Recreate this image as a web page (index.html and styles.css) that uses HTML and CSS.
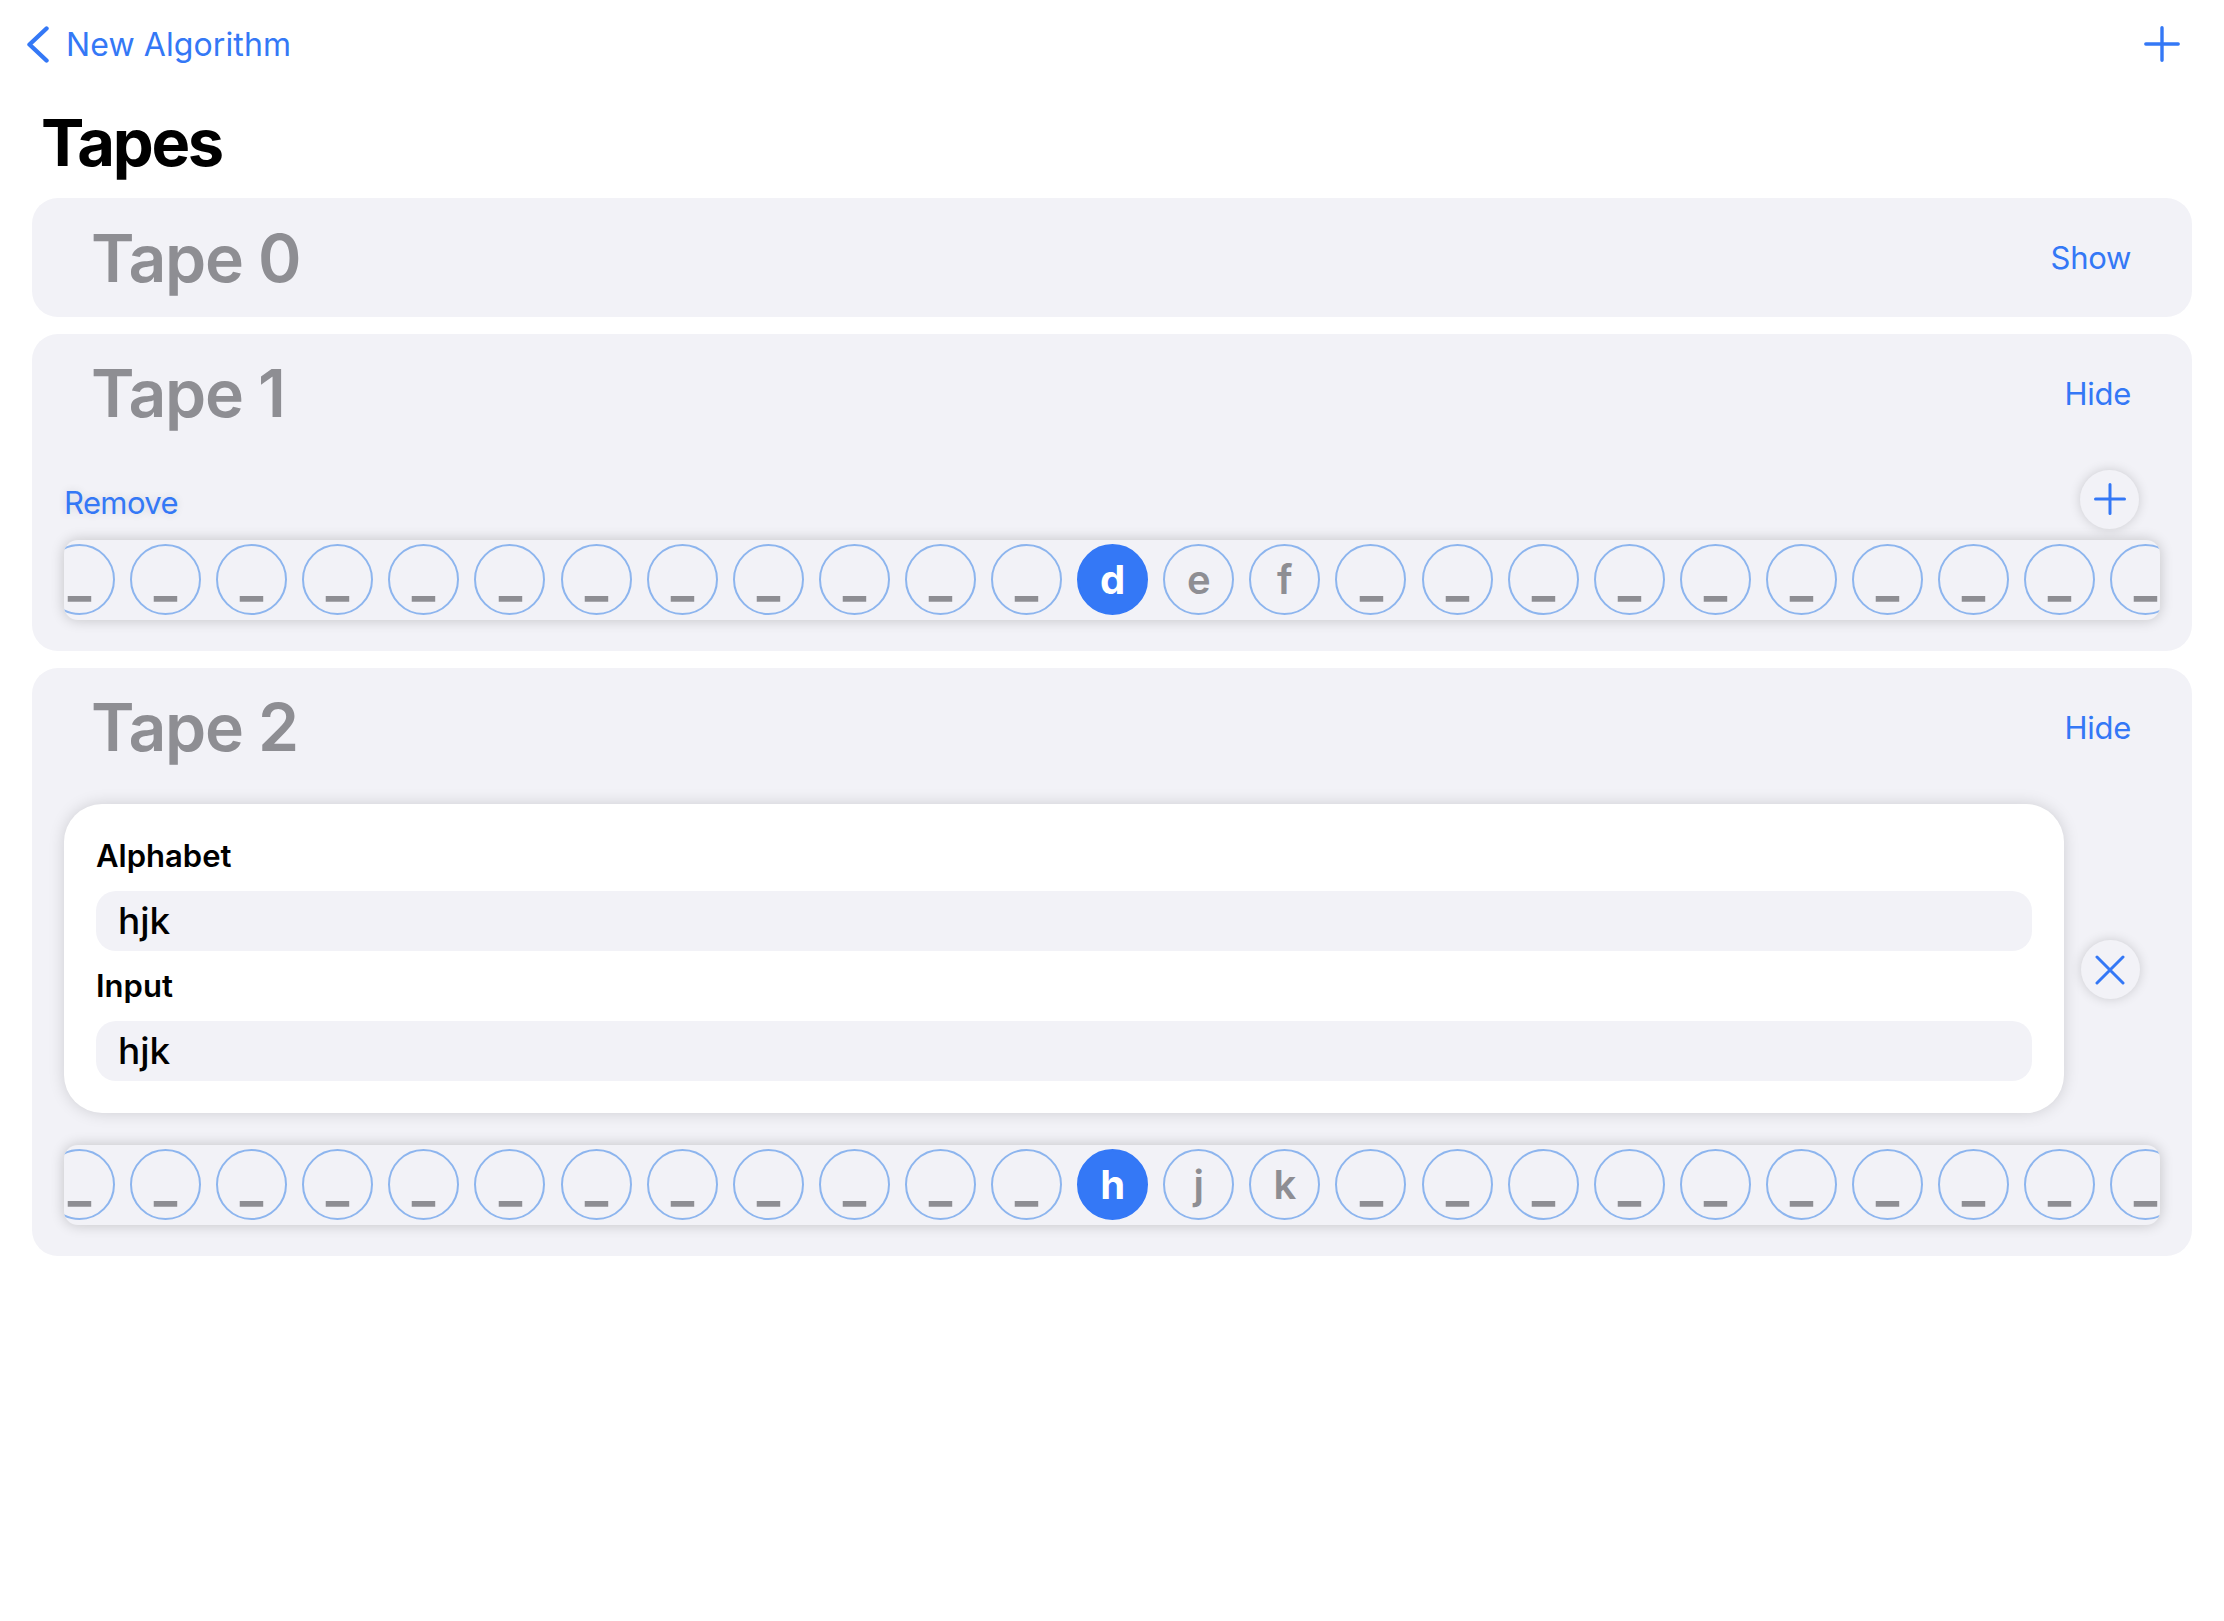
FILE: index.html
```html
<!DOCTYPE html>
<html lang="en">
<head>
<meta charset="utf-8">
<title>Tapes</title>
<link rel="stylesheet" href="styles.css">
</head>
<body>
<div class="app">
  <header class="nav">
    <a class="back">
      <svg class="chev" width="22" height="37" viewBox="0 0 22 37"><path d="M19.5 2.5 L2.5 18.5 L19.5 34.5" fill="none" stroke="#3478f6" stroke-width="4.4" stroke-linecap="round" stroke-linejoin="round"/></svg>
      <span>New Algorithm</span>
    </a>
    <button class="nav-add" aria-label="Add">
      <svg width="36" height="36" viewBox="0 0 36 36"><path d="M18 1.8 V34.2 M1.8 18 H34.2" fill="none" stroke="#3478f6" stroke-width="3.4" stroke-linecap="round"/></svg>
    </button>
  </header>

  <h1 class="title">Tapes</h1>

  <div class="tapes">
    <section class="tape">
      <div class="tape-head"><h2>Tape 0</h2><span class="link">Show</span></div>
    </section>

    <section class="tape tape-open">
      <div class="tape-head"><h2>Tape 1</h2><span class="link">Hide</span></div>
      <div class="tape-tools">
        <span class="link remove">Remove</span>
        <button class="round-btn" aria-label="Add">
          <svg width="32" height="32" viewBox="0 0 32 32"><path d="M16 1.5 V30.5 M1.5 16 H30.5" fill="none" stroke="#3478f6" stroke-width="3" stroke-linecap="round"/></svg>
        </button>
      </div>
      <div class="strip">
        <div class="cells">
          <span class="cell"><span class="blank">_</span></span><span class="cell"><span class="blank">_</span></span><span class="cell"><span class="blank">_</span></span><span class="cell"><span class="blank">_</span></span><span class="cell"><span class="blank">_</span></span><span class="cell"><span class="blank">_</span></span><span class="cell"><span class="blank">_</span></span><span class="cell"><span class="blank">_</span></span><span class="cell"><span class="blank">_</span></span><span class="cell"><span class="blank">_</span></span><span class="cell"><span class="blank">_</span></span><span class="cell"><span class="blank">_</span></span>
          <span class="cell head">d</span><span class="cell">e</span><span class="cell">f</span>
          <span class="cell"><span class="blank">_</span></span><span class="cell"><span class="blank">_</span></span><span class="cell"><span class="blank">_</span></span><span class="cell"><span class="blank">_</span></span><span class="cell"><span class="blank">_</span></span><span class="cell"><span class="blank">_</span></span><span class="cell"><span class="blank">_</span></span><span class="cell"><span class="blank">_</span></span><span class="cell"><span class="blank">_</span></span><span class="cell"><span class="blank">_</span></span>
        </div>
      </div>
    </section>

    <section class="tape tape-open">
      <div class="tape-head"><h2>Tape 2</h2><span class="link">Hide</span></div>
      <div class="editor-row">
        <div class="editor">
          <div class="label">Alphabet</div>
          <div class="field">hjk</div>
          <div class="label">Input</div>
          <div class="field field-last">hjk</div>
        </div>
        <div class="editor-side">
          <button class="round-btn" aria-label="Close">
            <svg width="30" height="30" viewBox="0 0 30 30"><path d="M2 2 L28 28 M28 2 L2 28" fill="none" stroke="#3478f6" stroke-width="3" stroke-linecap="round"/></svg>
          </button>
        </div>
      </div>
      <div class="strip strip-far">
        <div class="cells">
          <span class="cell"><span class="blank">_</span></span><span class="cell"><span class="blank">_</span></span><span class="cell"><span class="blank">_</span></span><span class="cell"><span class="blank">_</span></span><span class="cell"><span class="blank">_</span></span><span class="cell"><span class="blank">_</span></span><span class="cell"><span class="blank">_</span></span><span class="cell"><span class="blank">_</span></span><span class="cell"><span class="blank">_</span></span><span class="cell"><span class="blank">_</span></span><span class="cell"><span class="blank">_</span></span><span class="cell"><span class="blank">_</span></span>
          <span class="cell head">h</span><span class="cell">j</span><span class="cell">k</span>
          <span class="cell"><span class="blank">_</span></span><span class="cell"><span class="blank">_</span></span><span class="cell"><span class="blank">_</span></span><span class="cell"><span class="blank">_</span></span><span class="cell"><span class="blank">_</span></span><span class="cell"><span class="blank">_</span></span><span class="cell"><span class="blank">_</span></span><span class="cell"><span class="blank">_</span></span><span class="cell"><span class="blank">_</span></span><span class="cell"><span class="blank">_</span></span>
        </div>
      </div>
    </section>
  </div>
</div>
</body>
</html>
```

FILE: styles.css
```css
* { box-sizing: border-box; }

html, body {
  margin: 0;
  padding: 0;
  background: #ffffff;
}

body {
  font-family: Inter, "Noto Sans", "Liberation Sans", sans-serif;
  color: #000;
}

.app {
  width: 2224px;
  min-height: 1621px;
}

/* Navigation bar */
.nav {
  height: 88px;
  display: flex;
  align-items: center;
  justify-content: space-between;
  padding: 0 44px 0 27px;
}

.back {
  display: flex;
  align-items: center;
  gap: 17px;
  color: #3478f6;
  font-size: 32px;
  letter-spacing: 0.1px;
  text-decoration: none;
}

.chev { display: block; }

.nav-add {
  border: none;
  background: none;
  padding: 0;
  width: 36px;
  height: 36px;
  display: flex;
}

/* Large title */
.title {
  margin: 15px 0 0 41px;
  font-size: 65px;
  line-height: 80px;
  font-weight: 700;
  letter-spacing: -2.3px;
}

/* Tape cards */
.tapes {
  margin: 15px 32px 0;
  display: flex;
  flex-direction: column;
  gap: 16.5px;
}

.tape {
  background: #f2f2f7;
  border-radius: 26px;
  padding: 0 32px;
}

.tape-open { padding-bottom: 31.5px; }

.tape-head {
  height: 119px;
  display: flex;
  align-items: center;
  justify-content: space-between;
  padding: 0 29px 0 27px;
}

.tape-head h2 {
  margin: 0;
  font-size: 66px;
  font-weight: 600;
  color: #8e8e93;
  letter-spacing: -1.3px;
}

.link {
  color: #3478f6;
  font-size: 31px;
  letter-spacing: -0.3px;
}

/* Remove + add row */
.tape-tools {
  margin-top: 17px;
  height: 59px;
  display: flex;
  align-items: center;
  justify-content: space-between;
  padding-right: 21px;
}

.remove {
  padding-top: 7px;
  letter-spacing: -0.6px;
  text-shadow: 0 0 8px rgba(0, 0, 0, 0.12);
}

.round-btn {
  width: 59px;
  height: 59px;
  border-radius: 50%;
  border: none;
  padding: 0;
  background: #f2f2f7;
  box-shadow: 0 0 12px rgba(0, 0, 0, 0.16);
  display: flex;
  align-items: center;
  justify-content: center;
}

/* Tape strip */
.strip {
  margin-top: 11px;
  height: 80px;
  border-radius: 14px;
  background: #f2f2f7;
  box-shadow: 0 0 14px rgba(0, 0, 0, 0.2);
  overflow: hidden;
  display: flex;
  align-items: center;
}

.strip-far { margin-top: 32px; }

.cells {
  display: flex;
  gap: 15.1px;
  margin-left: -20px;
  flex-shrink: 0;
}

.cell {
  width: 71px;
  height: 71px;
  flex-shrink: 0;
  border: 2px solid #8db5ee;
  border-radius: 50%;
  display: flex;
  align-items: center;
  justify-content: center;
  font-size: 40px;
  font-weight: 600;
  color: #8e8e93;
}

.blank {
  display: inline-block;
  transform: scale(1.25, 1.4);
  transform-origin: 50% 70%;
}

.cell.head {
  background: #3478f6;
  border-color: #3478f6;
  color: #ffffff;
  font-weight: 700;
}

/* Editor */
.editor-row {
  margin-top: 17px;
  display: flex;
}

.editor {
  flex: 1;
  background: #ffffff;
  border-radius: 38px;
  box-shadow: 0 0 16px rgba(0, 0, 0, 0.15);
  padding: 34px 32px 32px;
}

.label {
  font-size: 31px;
  line-height: 36px;
  font-weight: 600;
}

.field {
  margin: 17px 0;
  height: 60px;
  border-radius: 20px;
  background: #f2f2f7;
  display: flex;
  align-items: center;
  padding: 0 22px;
  font-size: 37px;
  font-weight: 500;
}

.field-last { margin-bottom: 0; }

.editor-side {
  width: 96px;
  display: flex;
  align-items: center;
  justify-content: center;
  padding: 23px 4px 0 0;
}
```
